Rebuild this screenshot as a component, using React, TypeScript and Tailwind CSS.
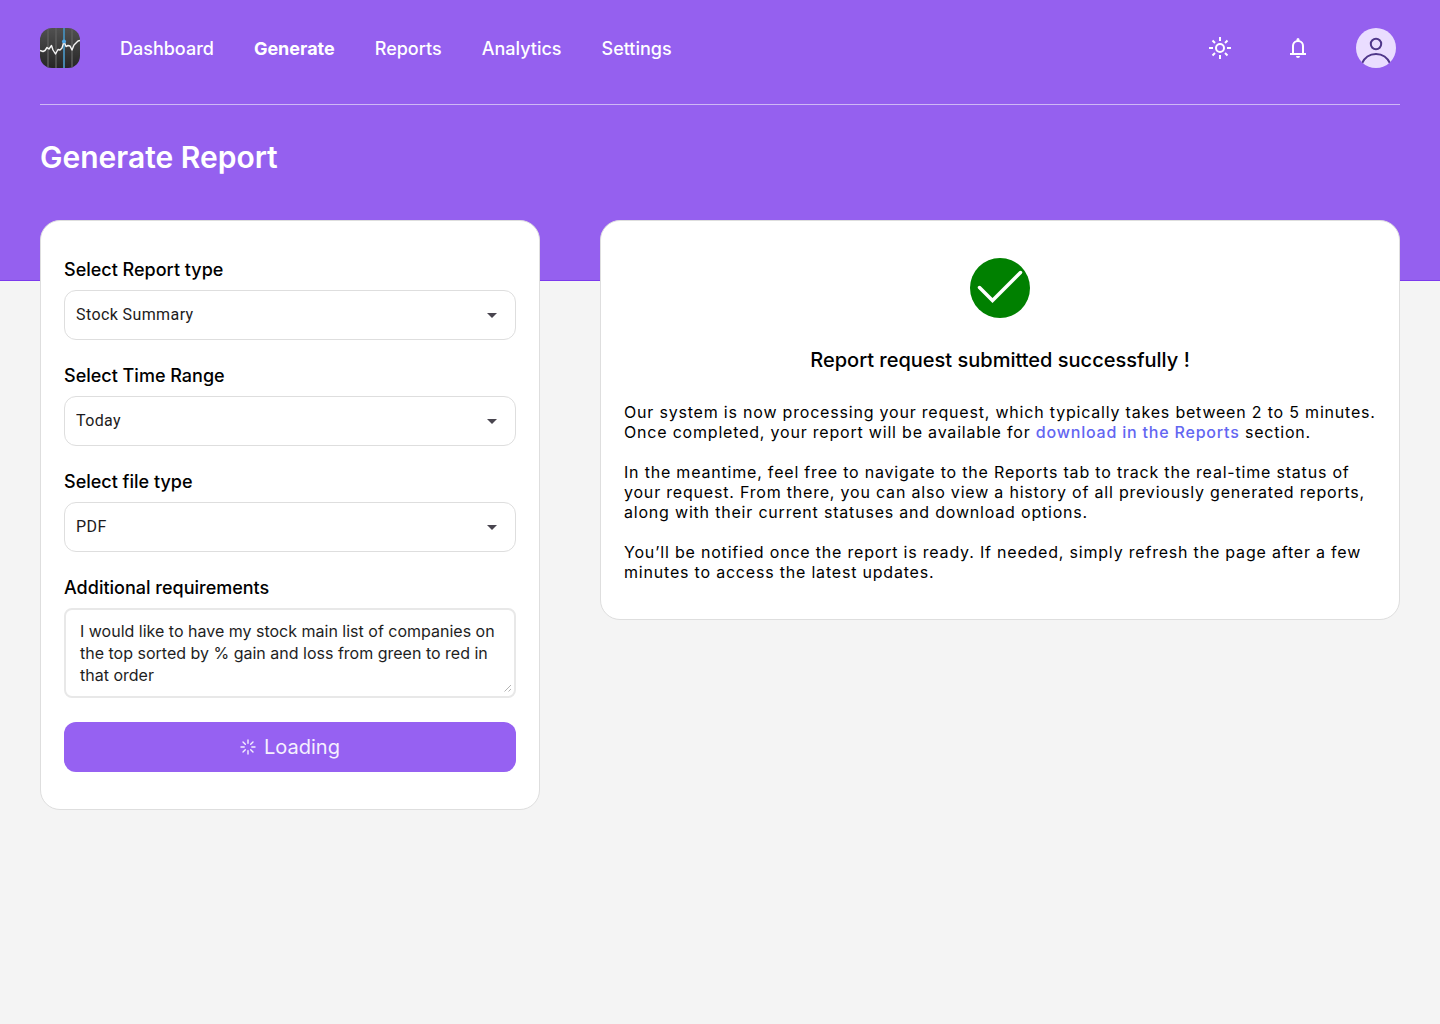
import { useState } from "react";

const navItems = ["Dashboard", "Generate", "Reports", "Analytics", "Settings"];

const selects = [
  { id: "report-type", label: "Select Report type", options: ["Stock Summary", "Portfolio"] },
  { id: "time-range", label: "Select Time Range", options: ["Today", "This week", "This month"] },
  { id: "file-type", label: "Select file type", options: ["PDF", "CSV"] },
];

function Logo() {
  return (
    <svg viewBox="0 0 40 40" className="size-10" aria-hidden="true">
      <defs>
        <linearGradient id="logo-bg" x1="0" y1="0" x2="0" y2="1">
          <stop offset="0" stopColor="#505050" />
          <stop offset="1" stopColor="#262626" />
        </linearGradient>
        <clipPath id="logo-clip">
          <rect width="40" height="40" rx="12" />
        </clipPath>
      </defs>
      <g clipPath="url(#logo-clip)">
        <rect width="40" height="40" fill="url(#logo-bg)" />
        <path d="M8 0V40M16 0V40M32 0V40" stroke="#5c5c5c" strokeWidth="1.500" />
        <path d="M24 0V40" stroke="#4685ab" strokeWidth="2" />
        <path
          d="M0 22.5 3 23.5 5 22.5 7 19.5 9 21 11.5 17.5 13 22 15.5 26 18 21.5 20 22 22 20 24 13.5 26 18.500 28 17.500 30 18 32 22 34 17 36 15 38 13 40 12.500"
          fill="none"
          stroke="#f5f5f5"
          strokeWidth="1.400"
          strokeLinejoin="round"
        />
        <circle cx="24" cy="13.500" r="2" fill="#4fa8e8" />
      </g>
    </svg>
  );
}

function SunIcon() {
  return (
    <svg viewBox="0 0 24 24" className="size-6" fill="none" stroke="currentColor" strokeWidth="2" aria-hidden="true">
      <circle cx="12" cy="12" r="4" />
      <path d="M12 1V5M12 19V23M1 12H5M19 12H23M4.500 4.500 7 7M17 17 19.500 19.500M4.500 19.500 7 17M17 7 19.500 4.500" />
    </svg>
  );
}

function BellIcon() {
  return (
    <svg viewBox="0 0 24 24" className="size-6" fill="currentColor" aria-hidden="true">
      <path d="M4 19v-2h2v-7c0-1.380.42-2.610 1.250-3.690A5.900 5.900 0 0 1 10.500 4.200V3.500a1.500 1.500 0 0 1 3 0v.7a5.900 5.900 0 0 1 3.250 2.110A5.900 5.900 0 0 1 18 10v7h2v2H4Zm8 3a2 2 0 0 1-2-2h4a2 2 0 0 1-2 2Zm-4-5h8v-7a4 4 0 0 0-8 0v7Z" />
    </svg>
  );
}

function Avatar() {
  return (
    <svg viewBox="0 0 40 40" className="size-10" aria-hidden="true">
      <clipPath id="avatar-clip">
        <circle cx="20" cy="20" r="20" />
      </clipPath>
      <g clipPath="url(#avatar-clip)">
        <rect width="40" height="40" fill="#eaddff" />
        <circle cx="20" cy="16" r="5.200" fill="none" stroke="#4f378a" strokeWidth="2" />
        <path d="M5.500 36C8.500 29.500 14 26 20 26S31.500 29.500 34.500 36" fill="none" stroke="#4f378a" strokeWidth="2" />
      </g>
    </svg>
  );
}

function Spinner() {
  return (
    <svg viewBox="0 0 16 16" className="size-4" fill="none" stroke="currentColor" strokeWidth="1.400" strokeLinecap="round" aria-hidden="true">
      <path d="M8 1V4.200M8 11.800V15M1 8H4.200M11.800 8H15M3 3 5.300 5.300M10.700 10.700 13 13M3 13 5.300 10.700M10.700 5.300 13 3" />
    </svg>
  );
}

export default function App() {
  const [notes, setNotes] = useState(
    "I would like to have my stock main list of companies on the top sorted by % gain and loss from green to red in that order",
  );

  return (
    <div className="min-h-screen bg-[#f4f4f4] font-['Inter',sans-serif] text-black">
      <header className="border-b border-[#7c3aed] bg-[#9560ef] px-10 pb-[103px] text-white">
        <div className="flex items-center justify-between border-b border-[#cfb8f5] pt-7 pb-9">
          <div className="flex items-center gap-10">
            <Logo />
            <nav className="flex gap-10 pt-0.5 text-lg leading-6">
              {navItems.map((item) => (
                <a key={item} href="#" className={item === "Generate" ? "font-bold" : "font-medium"}>
                  {item}
                </a>
              ))}
            </nav>
          </div>
          <div className="flex items-center pr-1">
            <button type="button" aria-label="Toggle theme" className="mr-[54px]">
              <SunIcon />
            </button>
            <button type="button" aria-label="Notifications" className="mr-[46px]">
              <BellIcon />
            </button>
            <button type="button" aria-label="Account">
              <Avatar />
            </button>
          </div>
        </div>
        <h1 className="pt-8 text-[30px] leading-10 font-semibold">Generate Report</h1>
      </header>

      <main className="-mt-[61px] grid grid-cols-[5fr_8fr] items-start gap-15 px-10">
        <form className="flex flex-col gap-6 rounded-[20px] border border-[#dedede] bg-white px-[23px] py-[37px]">
          {selects.map((field) => (
            <div key={field.id} className="flex flex-col gap-2">
              <label htmlFor={field.id} className="text-lg leading-6 font-medium">
                {field.label}
              </label>
              <div className="relative">
                <select
                  id={field.id}
                  className="h-[50px] w-full appearance-none rounded-xl border border-[#dedede] bg-white px-[11px] font-['Roboto',sans-serif] text-base tracking-wide text-[#1d1b20]"
                >
                  {field.options.map((option) => (
                    <option key={option}>{option}</option>
                  ))}
                </select>
                <svg viewBox="0 0 10 5" className="pointer-events-none absolute top-[23px] right-[19px] h-[5px] w-[10px]" aria-hidden="true">
                  <path d="M0 0H10L5 5Z" fill="#49454f" />
                </svg>
              </div>
            </div>
          ))}
          <div className="flex flex-col gap-2">
            <label htmlFor="notes" className="text-lg leading-6 font-medium">
              Additional requirements
            </label>
            <div className="relative flex">
              <textarea
                id="notes"
                rows={3}
                value={notes}
                onChange={(e) => setNotes(e.target.value)}
                className="w-full resize-none rounded-lg border-2 border-[#e8e8e8] bg-white px-[14px] py-[10px] text-base leading-[22px] text-[#1e1e1e]"
              />
              <svg viewBox="0 0 8 8" className="pointer-events-none absolute right-1 bottom-1.5 size-2" stroke="#b3b3b3" aria-hidden="true">
                <path d="M0.500 7.500 7 1M4.500 7.500 7 5" />
              </svg>
            </div>
          </div>
          <button type="submit" className="flex h-[50px] items-center justify-center gap-2 rounded-xl bg-[#9661f2] text-xl text-[#f5f0fe]">
            <Spinner />
            Loading
          </button>
        </form>

        <section className="flex flex-col rounded-[20px] border border-[#dedede] bg-white px-[23px] py-[37px]">
          <svg viewBox="0 0 60 60" className="size-15 self-center" aria-hidden="true">
            <circle cx="30" cy="30" r="30" fill="#008000" />
            <path d="M9.500 29.500 22.500 42.500 50.500 14.500" fill="none" stroke="#fff" strokeWidth="3.500" strokeLinecap="round" />
          </svg>
          <h2 className="mt-[30px] text-center text-xl leading-6 font-medium">Report request submitted successfully !</h2>
          <div className="mt-[30px] flex flex-col gap-5 text-base leading-5 tracking-wider">
            <p>
              Our system is now processing your request, which typically takes between 2 to 5 minutes. Once completed, your report will be available for{" "}
              <a href="#" className="font-medium text-[#6366f1]">
                download in the Reports
              </a>{" "}
              section.
            </p>
            <p>
              In the meantime, feel free to navigate to the Reports tab to track the real-time status of your request. From there, you can also view a
              history of all previously generated reports, along with their current statuses and download options.
            </p>
            <p>
              You’ll be notified once the report is ready. If needed, simply refresh the page after a few minutes to access the latest updates.
            </p>
          </div>
        </section>
      </main>
    </div>
  );
}
